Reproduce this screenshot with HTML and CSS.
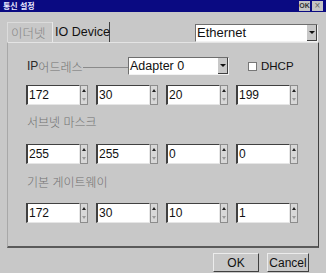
FILE: index.html
```html
<!DOCTYPE html>
<html lang="ko">

<head>
    <meta charset="UTF-8">
    <meta name="viewport" content="width=device-width, initial-scale=1.0">
    <title>통신 설정</title>
    <link rel="stylesheet" href="styles.css">
</head>

<body>
    <div class="titlebar">
        <span class="title">통신 설정</span>
        <span class="tb-btn">OK</span>
        <span class="tb-btn close">&times;</span>
    </div>

    <div class="top">
        <div class="tab tab-eth">이더넷</div>
        <div class="tab tab-io">IO Device</div>
        <div class="combo combo-eth">
            <span class="combo-text">Ethernet</span>
            <span class="combo-arrow"></span>
        </div>
    </div>

    <div class="panel">
        <div class="ip-head">
            <div class="head-label"><b>IP</b>어드레스<span class="head-line"></span></div>
            <div class="combo combo-adapter">
                <span class="combo-text">Adapter 0</span>
                <span class="combo-arrow"></span>
            </div>
            <label class="check"><span class="box"></span>DHCP</label>
        </div>

        <div class="row row-ip">
            <div class="spin"><span class="edit">172</span><span class="updown"><i class="up"></i><i class="down"></i></span></div>
            <div class="spin"><span class="edit">30</span><span class="updown"><i class="up"></i><i class="down"></i></span></div>
            <div class="spin"><span class="edit">20</span><span class="updown"><i class="up"></i><i class="down"></i></span></div>
            <div class="spin"><span class="edit">199</span><span class="updown"><i class="up"></i><i class="down"></i></span></div>
        </div>

        <div class="section-label label-mask">서브넷 마스크</div>
        <div class="row row-mask">
            <div class="spin"><span class="edit">255</span><span class="updown"><i class="up"></i><i class="down"></i></span></div>
            <div class="spin"><span class="edit">255</span><span class="updown"><i class="up"></i><i class="down"></i></span></div>
            <div class="spin"><span class="edit">0</span><span class="updown"><i class="up"></i><i class="down"></i></span></div>
            <div class="spin"><span class="edit">0</span><span class="updown"><i class="up"></i><i class="down"></i></span></div>
        </div>

        <div class="section-label label-gw">기본 게이트웨이</div>
        <div class="row row-gw">
            <div class="spin"><span class="edit">172</span><span class="updown"><i class="up"></i><i class="down"></i></span></div>
            <div class="spin"><span class="edit">30</span><span class="updown"><i class="up"></i><i class="down"></i></span></div>
            <div class="spin"><span class="edit">10</span><span class="updown"><i class="up"></i><i class="down"></i></span></div>
            <div class="spin"><span class="edit">1</span><span class="updown"><i class="up"></i><i class="down"></i></span></div>
        </div>
    </div>

    <div class="footer">
        <button class="btn btn-ok">OK</button>
        <button class="btn btn-cancel">Cancel</button>
    </div>
</body>

</html>
```

FILE: styles.css
```css
:root {
    --face: #c8c8c8;
    --dark: #6e6e6e;
    --darker: #404040;
    --light: #f2f2f2;
    --label: #727272;
}

body {
    margin: 0;
    width: 326px;
    height: 273px;
    overflow: hidden;
    background-color: var(--face);
    font-family: 'Liberation Sans', 'Noto Sans CJK KR', sans-serif;
    color: #111;
}

/* title bar */
.titlebar {
    display: flex;
    align-items: center;
    height: 12px;
    padding: 0 3px 0 3px;
    background-color: #0a0a82;
}

.title {
    flex: 1;
    color: #e8e8ff;
    font-family: 'Noto Sans CJK KR', sans-serif;
    font-size: 8px;
    font-weight: bold;
    line-height: 12px;
}

.tb-btn {
    width: 11px;
    height: 10px;
    margin-left: 2px;
    background-color: #c4c4c4;
    color: #333;
    font-size: 7px;
    font-weight: bold;
    line-height: 10px;
    text-align: center;
}

.tb-btn.close {
    font-size: 10px;
    font-weight: normal;
    color: #666;
}

/* tabs + connection combo */
.top {
    display: flex;
    height: 20px;
    margin-top: 10px;
    padding: 0 8px 0 7px;
}

.tab {
    height: 20px;
    line-height: 20px;
    box-sizing: border-box;
    white-space: nowrap;
}

.tab-eth {
    width: 45px;
    padding-left: 3px;
    border-top: 1px solid #dcdcdc;
    border-left: 1px solid #dcdcdc;
    color: #858585;
    font-family: 'Noto Sans CJK KR', sans-serif;
    font-size: 12.5px;
    font-weight: 300;
}

.tab-io {
    width: 58px;
    padding-left: 2px;
    border-left: 1px solid #e8e8e8;
    border-right: 1px solid var(--darker);
    font-size: 12.5px;
}

.combo {
    display: flex;
    box-sizing: border-box;
    background-color: #fff;
    border-top: 1px solid var(--dark);
    border-left: 1px solid var(--dark);
    border-right: 1px solid var(--light);
    border-bottom: 1px solid var(--light);
}

.combo-eth {
    width: 123px;
    height: 18px;
    margin: 2px 0 0 auto;
}

.combo-text {
    flex: 1;
    padding-left: 1px;
    line-height: 16px;
    white-space: nowrap;
}

.combo-eth .combo-text {
    font-size: 13px;
}

.combo-arrow {
    position: relative;
    width: 10px;
    background-color: var(--face);
    border-right: 1px solid var(--darker);
    border-bottom: 1px solid var(--darker);
    box-sizing: border-box;
}

.combo-arrow::after {
    content: '';
    position: absolute;
    left: 2px;
    top: 6px;
    border-left: 3px solid transparent;
    border-right: 3px solid transparent;
    border-top: 3px solid #111;
}

/* tab page */
.panel {
    box-sizing: border-box;
    height: 206px;
    margin: 0 7px 0 7px;
    padding: 0 0 0 18px;
    border-top: 1px solid #e4e4e4;
    border-left: 1px solid #a8a8a8;
    border-right: 1px solid var(--darker);
    border-bottom: 2px solid #5a5a5a;
}

.ip-head {
    display: flex;
    align-items: center;
    height: 18px;
    margin-top: 14px;
}

.head-label {
    display: flex;
    align-items: center;
    width: 102px;
    padding-left: 1px;
    box-sizing: border-box;
    color: var(--label);
    font-family: 'Noto Sans CJK KR', sans-serif;
    font-size: 12px;
    font-weight: 300;
    white-space: nowrap;
}

.head-label b {
    color: #2a2a2a;
    font-family: 'Liberation Sans', sans-serif;
    font-size: 12px;
}

.head-line {
    flex: 1;
    height: 1px;
    margin-top: 2px;
    background-color: #8a8a8a;
}

.combo-adapter {
    width: 101px;
    height: 18px;
}

.combo-adapter .combo-text {
    font-size: 12.5px;
}

.check {
    display: flex;
    align-items: center;
    margin-left: 19px;
    font-size: 11.5px;
}

.box {
    width: 7px;
    height: 7px;
    margin-right: 4px;
    background-color: #fff;
    border: 1px solid #777;
}

.row {
    display: flex;
    gap: 8px;
    height: 20px;
}

.row-ip {
    margin-top: 10px;
}

.row-mask {
    margin-top: 14px;
}

.row-gw {
    margin-top: 13px;
}

.section-label {
    height: 16px;
    padding-left: 1px;
    color: var(--label);
    font-family: 'Noto Sans CJK KR', sans-serif;
    font-size: 12px;
    font-weight: 300;
    line-height: 16px;
}

.label-mask {
    margin-top: 9px;
}

.label-gw {
    margin-top: 10px;
}

.spin {
    display: flex;
    height: 20px;
}

.edit {
    box-sizing: border-box;
    width: 54px;
    height: 20px;
    padding-left: 1px;
    background-color: #fff;
    border-top: 1px solid var(--darker);
    border-left: 2px solid var(--darker);
    border-right: 1px solid #e6e6e6;
    border-bottom: 1px solid #e6e6e6;
    font-size: 12px;
    line-height: 18px;
}

.updown {
    display: flex;
    flex-direction: column;
    width: 8px;
    height: 20px;
    box-sizing: border-box;
    border: 1px solid #8c8c8c;
}

.updown i {
    position: relative;
    flex: 1;
    background-color: #d8d8d8;
}

.updown i::after {
    content: '';
    position: absolute;
    left: 1px;
    border-left: 2px solid transparent;
    border-right: 2px solid transparent;
}

.updown .up::after {
    top: 3px;
    border-bottom: 3px solid #222;
}

.updown .down::after {
    top: 3px;
    border-top: 3px solid #9a9a9a;
}

/* dialog buttons */
.footer {
    display: flex;
    justify-content: flex-end;
    gap: 8px;
    margin-top: 5px;
    padding-right: 17px;
}

.btn {
    height: 19px;
    padding: 0;
    background-color: var(--face);
    border-top: 1px solid #ececec;
    border-left: 1px solid #ececec;
    border-right: 1px solid var(--darker);
    border-bottom: 1px solid var(--darker);
    font-family: 'Liberation Sans', sans-serif;
    font-size: 12px;
    color: #111;
}

.btn-ok {
    width: 46px;
}

.btn-cancel {
    width: 42px;
}
```
